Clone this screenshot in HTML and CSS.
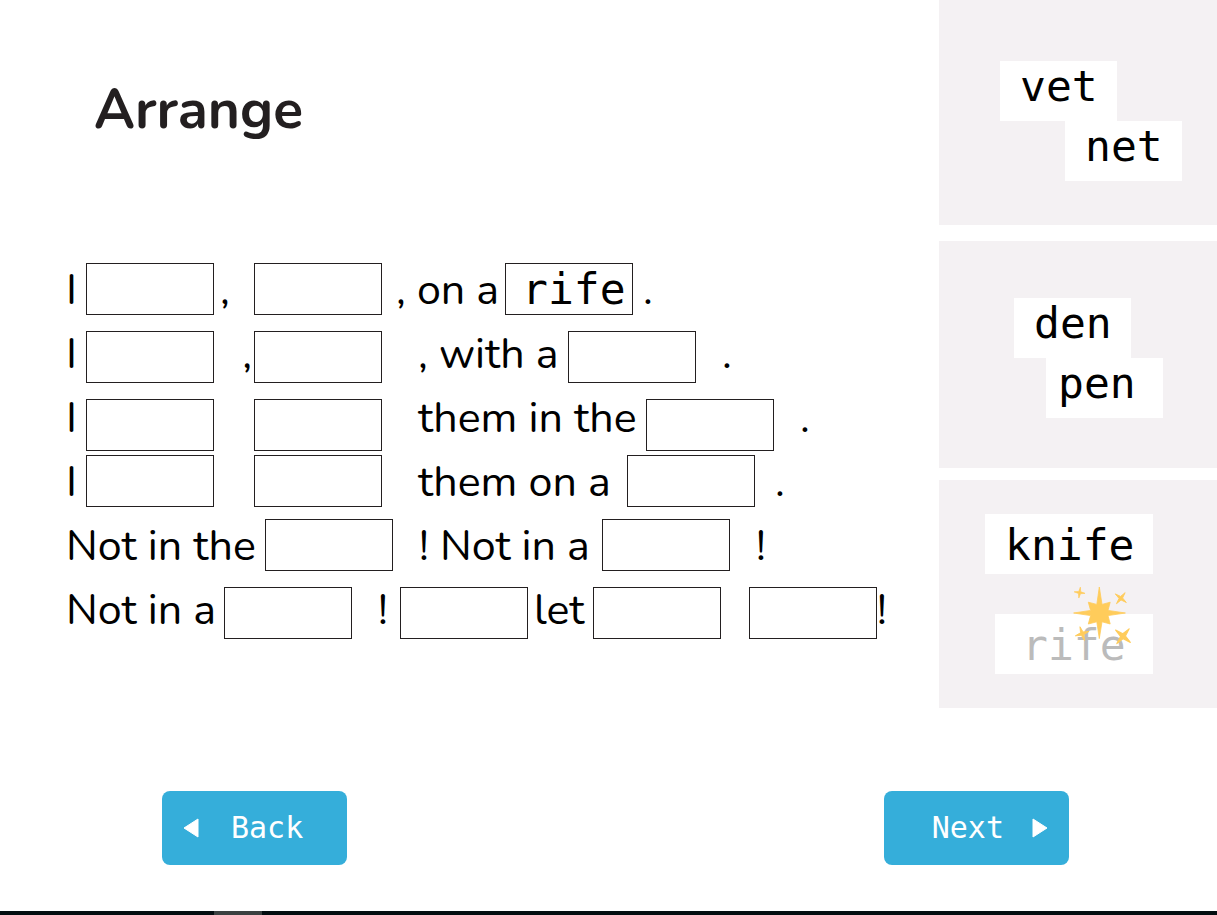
FILE: index.html
```html
<!DOCTYPE html>
<html lang="en">
<head>
<meta charset="utf-8">
<meta name="viewport" content="width=device-width, initial-scale=1">
<title>Arrange</title>
<link rel="stylesheet" href="styles.css">
</head>
<body>
<div class="page">
  <div class="activity">
    <main class="board">
      <h1 class="title">Arrange</h1>
      <div class="poem">
        <div class="line line-1">
          <span>I</span><input class="slot" aria-label="Line 1, word 1" readonly>
          <span class="pad-s">,</span><input class="slot" aria-label="Line 1, word 2" readonly>
          <span class="pad-m">, on a</span><input class="slot" aria-label="Line 1, word 3" value="rife" readonly>
          <span class="pad-sm">.</span>
        </div>
        <div class="line line-2 middle">
          <span>I</span><input class="slot" aria-label="Line 2, word 1" readonly>
          <span class="end">,</span><input class="slot" aria-label="Line 2, word 2" readonly>
          <span class="pad-xl">, with a</span><input class="slot" aria-label="Line 2, word 3" readonly>
          <span class="pad-l">.</span>
        </div>
        <div class="line line-3 low">
          <span>I</span><input class="slot" aria-label="Line 3, word 1" readonly>
          <span></span><input class="slot" aria-label="Line 3, word 2" readonly>
          <span class="pad-xl">them in the</span><input class="slot" aria-label="Line 3, word 3" readonly>
          <span class="pad-l">.</span>
        </div>
        <div class="line line-4">
          <span>I</span><input class="slot" aria-label="Line 4, word 1" readonly>
          <span></span><input class="slot" aria-label="Line 4, word 2" readonly>
          <span class="pad-xl">them on a</span><input class="slot" aria-label="Line 4, word 3" readonly>
          <span class="pad-ml">.</span>
        </div>
        <div class="line line-5">
          <span>Not in the</span><input class="slot" aria-label="Line 5, word 1" readonly>
          <span class="pad-l">! Not in a</span><input class="slot" aria-label="Line 5, word 2" readonly>
          <span class="pad-l">!</span>
        </div>
        <div class="line line-6 middle">
          <span>Not in a</span><input class="slot" aria-label="Line 6, word 1" readonly>
          <span class="pad-l">!</span><input class="slot" aria-label="Line 6, word 2" readonly>
          <span class="pad-s">let</span><input class="slot" aria-label="Line 6, word 3" readonly>
          <span></span><input class="slot" aria-label="Line 6, word 4" readonly>
          <span>!</span>
        </div>
      </div>
    </main>
    <aside class="bank" aria-label="Word bank">
      <section class="group group-et">
        <button class="word" type="button">vet</button>
        <button class="word word-net" type="button">net</button>
      </section>
      <section class="group group-en">
        <button class="word" type="button">den</button>
        <button class="word word-pen" type="button">pen</button>
      </section>
      <section class="group group-ife">
        <button class="word word-tall" type="button">knife</button>
        <button class="word word-tall word-used" type="button">rife
          <svg class="sparkle" viewBox="0 0 60 60" aria-hidden="true">
            <defs><path id="spark" d="M0-10 L1.8-1.8 L10 0 L1.8 1.8 L0 10 L-1.8 1.8 L-10 0 L-1.8-1.8Z" stroke-width="1.2" stroke-linejoin="round"/></defs>
            <g fill="#ffcc5b" stroke="#ffcc5b">
              <path stroke-width=".8" stroke-linejoin="round" d="M27.3 2 L30 19.4 L38.2 17.2 L36 25.4 L53.4 28 L36 30.6 L38.2 39 L30 36.8 L27.3 53.6 L24.8 36.8 L16.3 39 L18.6 30.6 L1.6 28 L18.6 25.4 L16.3 17.2 L24.8 19.4Z"/>
              <use href="#spark" transform="translate(7.6 7.6) rotate(8) scale(.55)"/>
              <use href="#spark" transform="translate(48.8 13.2) rotate(38) scale(.7)"/>
              <use href="#spark" transform="translate(10.2 48.6) rotate(-18) scale(.72)"/>
              <use href="#spark" transform="translate(51 51.2) rotate(40) scale(.96)"/>
            </g>
          </svg>
        </button>
      </section>
    </aside>
  </div>
  <nav class="controls" aria-label="Pages">
    <button class="nav-button" type="button">
      <svg class="arrow" viewBox="0 0 16 20" aria-hidden="true"><path d="M15 1v18L1 10z" fill="#fff" stroke="#fff" stroke-linejoin="round"/></svg>
      <span>Back</span>
    </button>
    <button class="nav-button nav-next" type="button">
      <span>Next</span>
      <svg class="arrow" viewBox="0 0 16 20" aria-hidden="true"><path d="M1 1v18l14-9z" fill="#fff" stroke="#fff" stroke-linejoin="round"/></svg>
    </button>
  </nav>
  <footer class="bottom-bar"><div class="bottom-thumb"></div></footer>
</div>
</body>
</html>
```
FILE: styles.css
```css
* { box-sizing: border-box; }

body {
  margin: 0;
  background: #fff;
  color: #000;
  font-family: Nunito, Lato, sans-serif;
}

.page {
  display: flex;
  flex-direction: column;
  min-height: 100vh;
}

.activity { display: flex; }

.board {
  flex: 1;
  padding: 78px 0 0 66px;
}

.title {
  margin: 0 0 121px 28px;
  color: #231f20;
  font-size: 55px;
  font-weight: 700;
  line-height: 64px;
}

.poem {
  display: flex;
  flex-direction: column;
  gap: 4px;
}

.line {
  display: grid;
  height: 60px;
  font-size: 43px;
  line-height: 55px;
  white-space: nowrap;
}

.line-1 { grid-template-columns: 20px 128px 40px 128px 123px 128px 1fr; }
.line-2 { grid-template-columns: 20px 128px 40px 128px 186px 128px 1fr; }
.line-3 { grid-template-columns: 20px 128px 40px 128px 264px 128px 1fr; }
.line-4 { grid-template-columns: 20px 128px 40px 128px 245px 128px 1fr; }
.line-5 { grid-template-columns: 199px 128px 209px 128px 1fr; }
.line-6 { grid-template-columns: 158px 128px 48px 128px 65px 128px 28px 128px 1fr; }

.slot {
  width: 128px;
  height: 52px;
  padding: 0 0 0 16px;
  border: 1px solid #231f20;
  border-radius: 0;
  background: #fff;
  color: #000;
  font: 43px "DejaVu Sans Mono", monospace;
}

.middle .slot { align-self: center; }
.low .slot { align-self: end; }

.pad-s { padding-left: 6px; }
.pad-sm { padding-left: 10px; }
.pad-m { padding-left: 14px; }
.pad-ml { padding-left: 20px; }
.pad-l { padding-left: 26px; }
.pad-xl { padding-left: 36px; }
.end { padding-right: 2px; text-align: right; }

.bank {
  display: flex;
  flex-direction: column;
  width: 278px;
}

.group {
  display: flex;
  flex-direction: column;
  align-items: flex-start;
  background: #f4f1f3;
}

.group-et { padding: 61px 0 44px 61px; margin-bottom: 16px; }
.group-en { padding: 57px 0 50px 75px; margin-bottom: 12px; }
.group-ife { padding: 34px 0 34px 46px; gap: 40px; }

.word {
  position: relative;
  padding: 0 19px 10px 20px;
  border: 0;
  background: #fff;
  color: #000;
  font: 43px/50px "DejaVu Sans Mono", monospace;
}

.word-net { margin-left: 65px; }
.word-pen { margin-left: 32px; padding-left: 12px; padding-right: 27px; }
.word-tall { padding-top: 6px; padding-bottom: 4px; }
.word-used { margin-left: 10px; padding-left: 27px; padding-right: 27px; color: #bbb; }

.sparkle {
  position: absolute;
  top: -29px;
  right: 21px;
  width: 60px;
  height: 60px;
}

.controls {
  display: flex;
  justify-content: space-between;
  padding: 83px 148px 46px 162px;
}

.nav-button {
  display: flex;
  align-items: center;
  gap: 32px;
  width: 185px;
  height: 74px;
  padding: 0 21px;
  border: 0;
  border-radius: 8px;
  background: #35aeda;
  color: #fff;
  font: 30px/36px "DejaVu Sans Mono", monospace;
}

.nav-next { justify-content: flex-end; gap: 28px; }

.arrow { width: 16px; height: 20px; }

.bottom-bar {
  height: 4px;
  margin-top: auto;
  padding-left: 214px;
  background: #030d10;
}

.bottom-thumb {
  width: 48px;
  height: 4px;
  background: #3b4141;
}
```
